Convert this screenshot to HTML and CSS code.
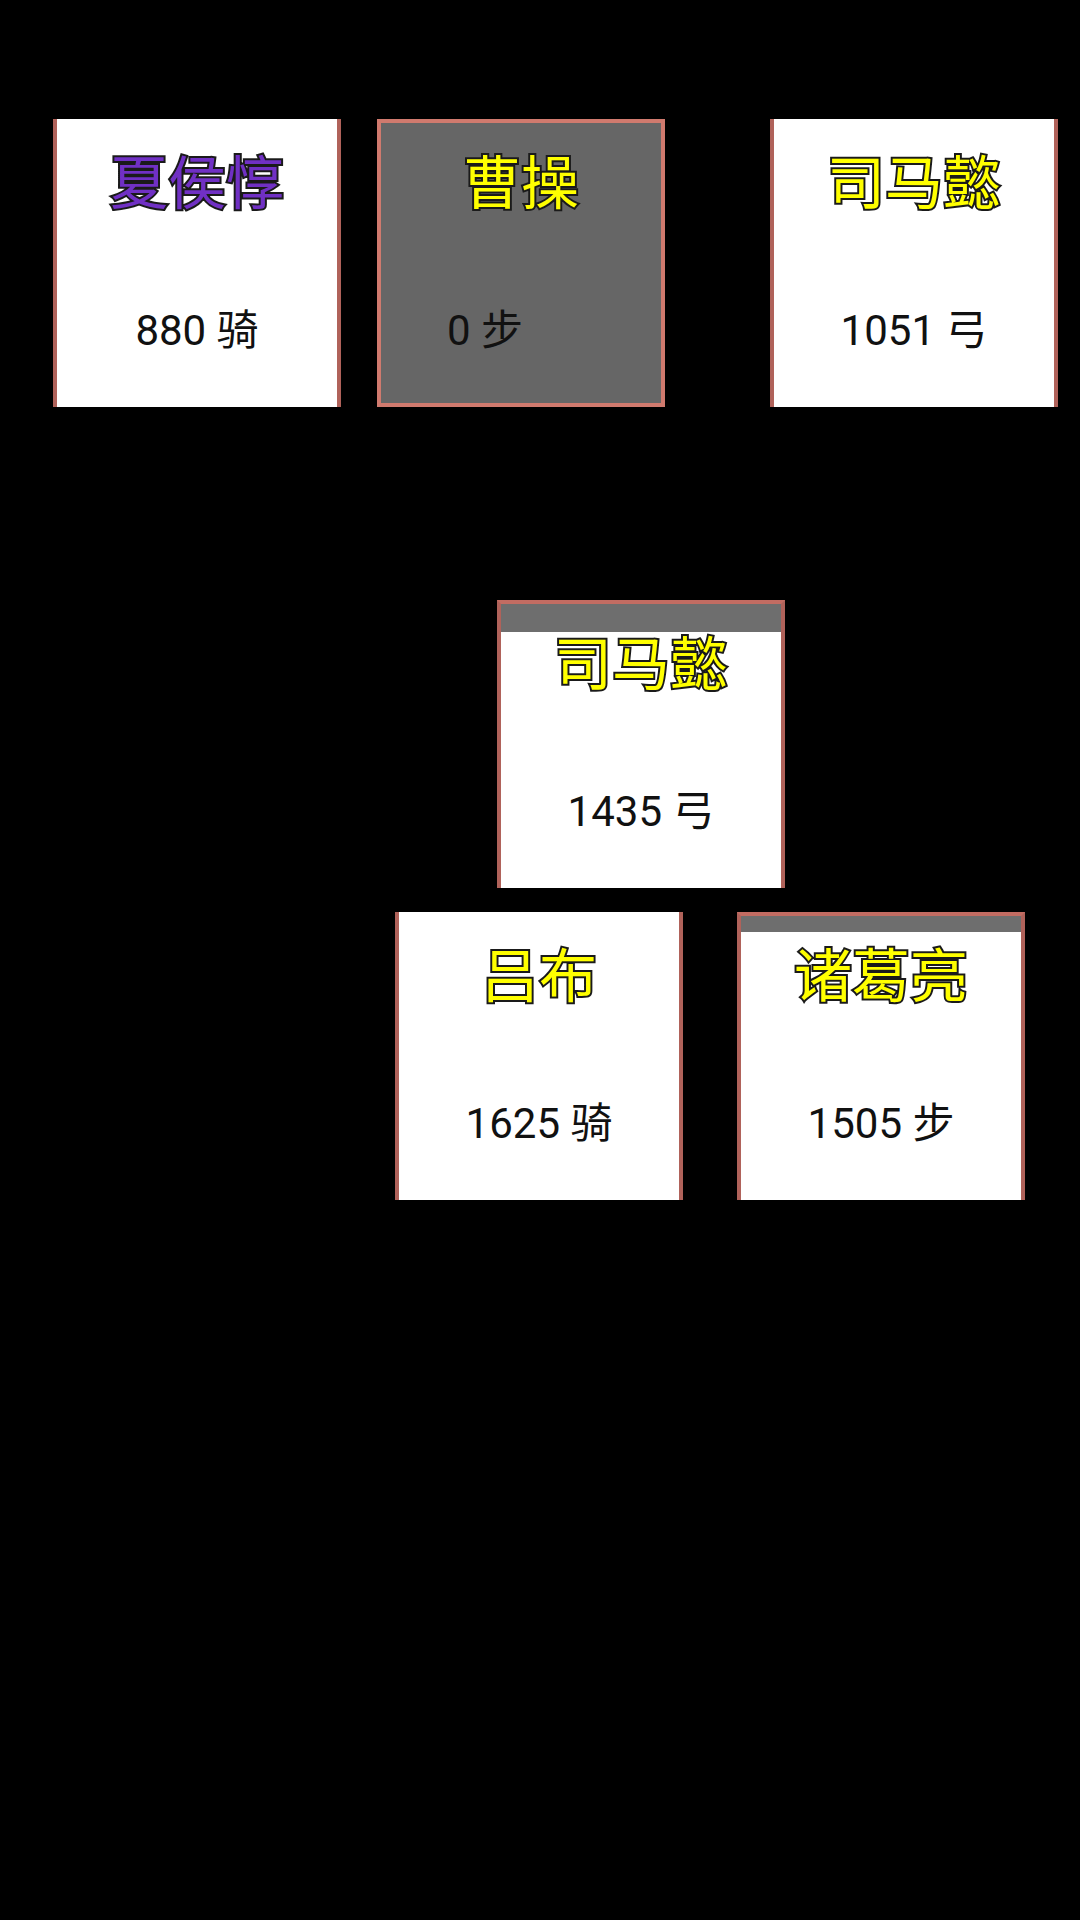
FILE: index.html
```html
<!DOCTYPE html>
<html lang="zh-CN">
<head>
    <meta charset="UTF-8">
    <meta name="viewport" content="width=device-width, initial-scale=1.0">
    <title>布阵</title>
    <link rel="stylesheet" href="styles.css">
</head>
<body>
    <div class="board">
        <div class="unit slot-1">
            <div class="general purple">夏侯惇</div>
            <div class="troops">880 骑</div>
        </div>

        <div class="unit selected slot-2">
            <div class="general">曹操</div>
            <div class="troops troops-left">0 步</div>
        </div>

        <div class="unit slot-3">
            <div class="general">司马懿</div>
            <div class="troops">1051 弓</div>
        </div>

        <div class="unit charging slot-4">
            <div class="cooldown" style="height: 28px"></div>
            <div class="general">司马懿</div>
            <div class="troops">1435 弓</div>
        </div>

        <div class="unit slot-5">
            <div class="general">吕布</div>
            <div class="troops">1625 骑</div>
        </div>

        <div class="unit charging slot-6">
            <div class="cooldown" style="height: 16px"></div>
            <div class="general">诸葛亮</div>
            <div class="troops">1505 步</div>
        </div>
    </div>
</body>
</html>
```

FILE: styles.css
```css
* {
    margin: 0;
    padding: 0;
    box-sizing: border-box;
}

body {
    background-color: #000;
    font-family: Roboto, "Noto Sans CJK SC", sans-serif;
}

.board {
    position: relative;
    width: 1080px;
    height: 1920px;
}

/* each unit sits on the field at its own spot */
.unit {
    position: absolute;
    width: 288px;
    height: 288px;
    background-color: #fff;
    border-left: 4px solid #b0625a;
    border-right: 4px solid #b0625a;
    text-align: center;
    overflow: hidden;
}

.slot-1 { left: 53px;  top: 119px; }
.slot-2 { left: 377px; top: 119px; }
.slot-3 { left: 770px; top: 119px; }
.slot-4 { left: 497px; top: 600px; }
.slot-5 { left: 395px; top: 912px; }
.slot-6 { left: 737px; top: 912px; }

.unit.selected {
    background-color: #666;
    border: 4px solid #d07a6e;
}

.unit.charging {
    border-top: 4px solid #c26c62;
}

.cooldown {
    position: absolute;
    top: 0;
    left: 0;
    right: 0;
    background-color: #6e6e6e;
}

.general {
    font-family: "Noto Sans CJK SC", sans-serif;
    font-size: 58px;
    font-weight: 400;
    line-height: 1;
    padding-top: 31px;
    color: #ffff00;
    -webkit-text-stroke: 4px #1a1a1a;
    paint-order: stroke fill;
}

.unit.selected .general,
.unit.charging .general {
    padding-top: 27px;
}

.general.purple {
    color: #7030c4;
}

.troops {
    font-size: 42px;
    line-height: 1;
    margin-top: 102px;
    color: #111;
}

.troops-left {
    text-align: left;
    padding-left: 66px;
}
```
